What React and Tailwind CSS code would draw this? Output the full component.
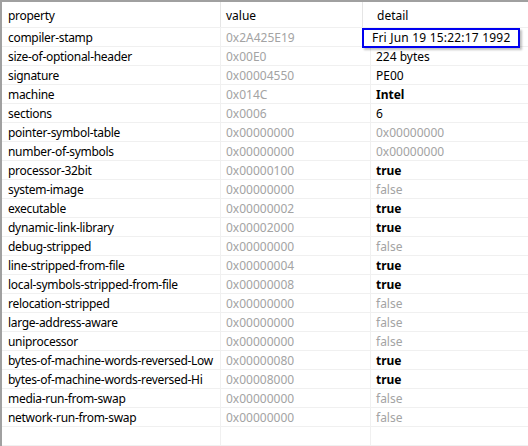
import React from "react";

const rows = [
  ["compiler-stamp", "0x2A425E19", "Fri Jun 19 15:22:17 1992", "edit"],
  ["size-of-optional-header", "0x00E0", "224 bytes", "n"],
  ["signature", "0x00004550", "PE00", "n"],
  ["machine", "0x014C", "Intel", "b"],
  ["sections", "0x0006", "6", "n"],
  ["pointer-symbol-table", "0x00000000", "0x00000000", "g"],
  ["number-of-symbols", "0x00000000", "0x00000000", "g"],
  ["processor-32bit", "0x00000100", "true", "b"],
  ["system-image", "0x00000000", "false", "g"],
  ["executable", "0x00000002", "true", "b"],
  ["dynamic-link-library", "0x00002000", "true", "b"],
  ["debug-stripped", "0x00000000", "false", "g"],
  ["line-stripped-from-file", "0x00000004", "true", "b"],
  ["local-symbols-stripped-from-file", "0x00000008", "true", "b"],
  ["relocation-stripped", "0x00000000", "false", "g"],
  ["large-address-aware", "0x00000000", "false", "g"],
  ["uniprocessor", "0x00000000", "false", "g"],
  ["bytes-of-machine-words-reversed-Low", "0x00000080", "true", "b"],
  ["bytes-of-machine-words-reversed-Hi", "0x00008000", "true", "b"],
  ["media-run-from-swap", "0x00000000", "false", "g"],
  ["network-run-from-swap", "0x00000000", "false", "g"],
];

function DetailCell({ text, kind }) {
  if (kind === "edit") {
    return (
      <div className="relative h-full">
        <div className="absolute left-[-9px] top-[-1px] w-[158px] h-[20px] border-2 border-[#0000f0] bg-white flex items-center pl-[8px] shadow-[2px_2px_2px_rgba(0,0,0,0.25)] text-[#000] tracking-[0.2px]">
          {text}
        </div>
      </div>
    );
  }
  const cls =
    kind === "b"
      ? "font-bold text-[#000]"
      : kind === "g"
      ? "text-[#a3a3a3]"
      : "text-[#000]";
  return <div className={"pl-[5px] flex items-center h-full " + cls}>{text}</div>;
}

export default function App() {
  return (
    <div
      className="w-[528px] h-[446px] overflow-hidden bg-white border-t-2 border-l-2 border-[#a0a0a0] text-[12px] leading-none"
      style={{ fontFamily: '"Noto Sans", "Open Sans", sans-serif' }}
    >
      {/* header */}
      <div className="grid grid-cols-[219px_142px_1fr] h-[25px] text-[#000]">
        <div className="border-r border-[#e5e5e5] flex items-center pl-[6px] pt-[2px] tracking-[-0.3px]">property</div>
        <div className="border-r border-[#e5e5e5] flex items-center pl-[5px] pt-[2px]">value</div>
        <div className="flex items-center pl-[14px] pt-[2px]">detail</div>
      </div>
      <div className="h-px bg-[#f0f0f0]" />
      {rows.map(([p, v, d, k]) => (
        <div key={p} className="grid grid-cols-[219px_150px_1fr] h-[19px] border-b border-[#f0f0f0]">
          <div className="border-r border-[#f0f0f0] flex items-center pl-[6px] pt-[1px] text-[#000] whitespace-nowrap overflow-hidden tracking-[-0.3px]">
            {p}
          </div>
          <div className="border-r border-[#f0f0f0] flex items-center pl-[5px] pt-[1px] text-[#a3a3a3]">{v}</div>
          <div className="pt-[1px] h-full">
            <DetailCell text={d} kind={k} />
          </div>
        </div>
      ))}
      <div className="grid grid-cols-[219px_150px_1fr] h-[19px] border-b border-[#f0f0f0]">
        <div className="border-r border-[#f0f0f0]" />
        <div className="border-r border-[#f0f0f0]" />
        <div />
      </div>
    </div>
  );
}
